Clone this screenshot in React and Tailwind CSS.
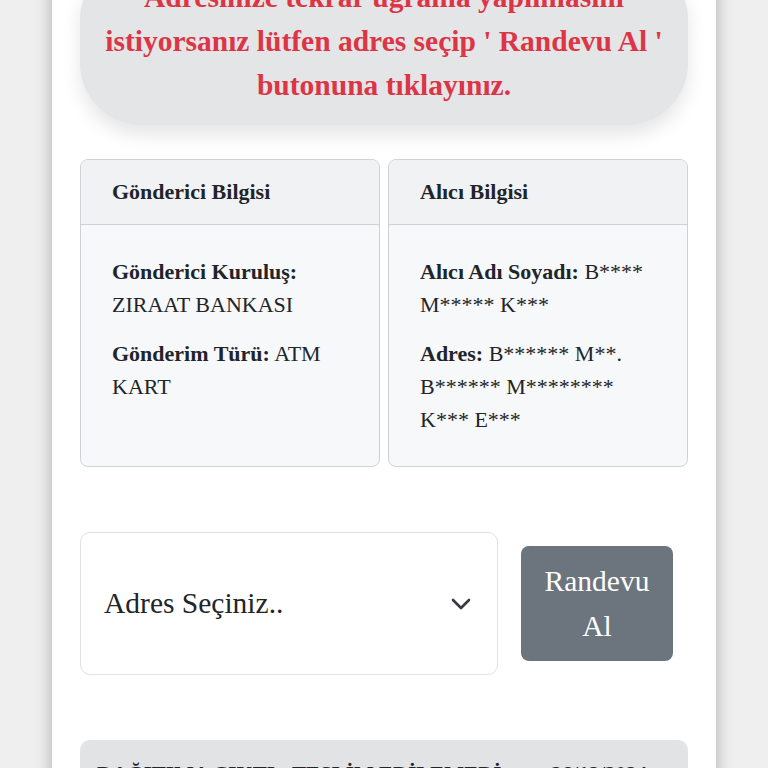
import React from 'react';

const Card = ({ title, children }) => {
  return (
    <div className="flex-1 rounded-lg border-[1.5px] border-[#cfd3d6] bg-[#f7f8f9] overflow-hidden">
      <div className="px-[31px] py-[20px] bg-[#f1f2f4] border-b-[1.5px] border-[#cfd3d6] font-bold text-[22px] leading-[24px]">
        {title}
      </div>
      <div className="px-[31px] pt-[30px] pb-[30px] flex flex-col gap-4 text-[22px] leading-[33px]">
        {children}
      </div>
    </div>
  );
};

const App = () => {
  return (
    <div className="min-h-screen bg-[#efefef] overflow-hidden" style={{ fontFamily: '"Liberation Serif", "Times New Roman", serif' }}>
      <div className="mx-auto w-[664px] min-h-[768px] bg-white px-[28px] shadow-[0_0_16px_rgba(0,0,0,0.28)] text-[#212529]">

        {/* uyarı */}
        <div className="-mt-[43px] rounded-[62px] bg-[#e4e5e7] px-4 py-[18px] text-center text-[29.5px] leading-[44px] font-bold text-[#dc3545] shadow-[0_10px_18px_rgba(0,0,0,0.10)]">
          Adresinize tekrar uğrama yapılmasını istiyorsanız lütfen adres seçip ' Randevu Al ' butonuna tıklayınız.
        </div>

        <div className="mt-[34px] flex gap-2">
          <Card title="Gönderici Bilgisi">
            <p><b>Gönderici Kuruluş:</b> ZIRAAT BANKASI</p>
            <p><b>Gönderim Türü:</b> ATM KART</p>
          </Card>
          <Card title="Alıcı Bilgisi">
            <p><b>Alıcı Adı Soyadı:</b> B**** M***** K***</p>
            <p><b>Adres:</b> B****** M**. B****** M******** K*** E***</p>
          </Card>
        </div>

        <div className="mt-[65px] flex items-center gap-[23px]">
          <div className="w-[418px] h-[143px] rounded-[10px] border-[1.5px] border-[#dee2e6] bg-white flex items-center justify-between pl-[23px] pr-[26px]">
            <span className="text-[29.5px]">Adres Seçiniz..</span>
            <svg width="20" height="12" viewBox="0 0 20 12" fill="none" stroke="#343a40" strokeWidth="2.6" strokeLinecap="round" strokeLinejoin="round">
              <polyline points="2,2 10,10 18,2" />
            </svg>
          </div>
          <button className="w-[152px] h-[115px] rounded-lg bg-[#6c757d] text-white text-[29.5px] leading-[45px] px-[20px]">
            Randevu Al
          </button>
        </div>

        <div className="mt-[65px] rounded-[10px] bg-[#e2e3e5] pl-[17px] pr-[41px] pt-[19px] pb-5 flex items-center gap-8 font-bold text-[21px] leading-[30px] whitespace-nowrap">
          <span>DAĞITIMA ÇIKTI - TESLİM EDİLEMEDİ</span>
          <span className="ml-auto">26/12/2024</span>
        </div>
      </div>
    </div>
  );
};

export default App;
